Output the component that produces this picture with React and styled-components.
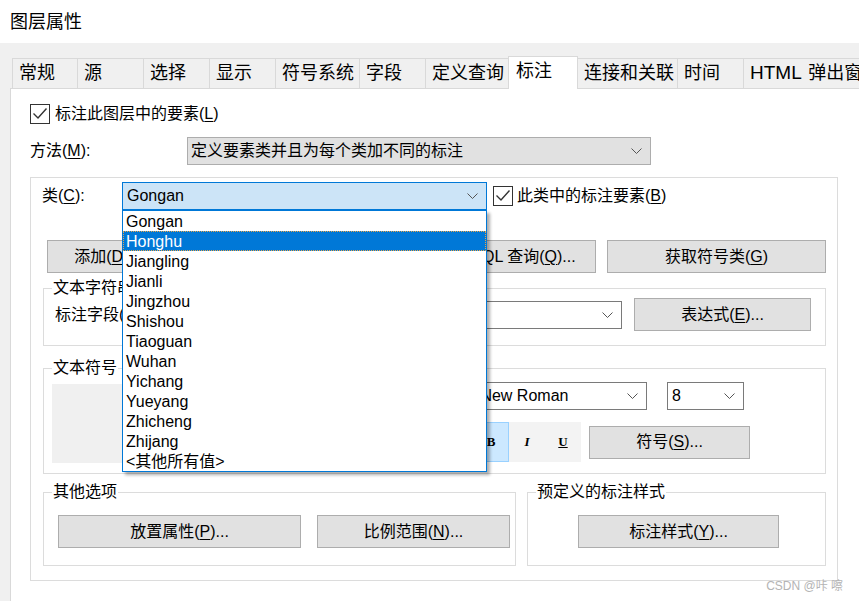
import React from "react";
import styled, { createGlobalStyle } from "styled-components";

const FONT = `"Liberation Sans", "Noto Sans CJK SC", sans-serif`;

const GlobalStyle = createGlobalStyle`
  html, body { margin: 0; padding: 0; background: #fff; }
  body { font-family: ${FONT}; color: #000; }
  *, *::before, *::after { box-sizing: border-box; }
`;

const Window = styled.div`
  position: relative;
  width: 859px;
  height: 601px;
  overflow: hidden;
  display: flex;
  flex-direction: column;
  background: #fff;
  font-family: ${FONT};
  color: #000;
`;

const TitleBar = styled.div`
  flex: none;
  height: 43px;
  padding-left: 10px;
  display: flex;
  align-items: center;
  font-size: 18px;
  line-height: 22px;
`;

const Body = styled.div`
  flex: 1;
  min-height: 0;
  display: flex;
  flex-direction: column;
  background: #f0f0f0;
  padding: 15px 0 0 10px;
`;

const TabStrip = styled.div`
  flex: none;
  display: flex;
  align-items: flex-end;
  height: 30px;
  padding-left: 2px;
  position: relative;
  z-index: 1;
`;

const Tab = styled.div`
  flex: none;
  width: ${(p) => p.$w}px;
  height: ${(p) => (p.$active ? 33 : 30)}px;
  margin-left: -1px;
  margin-bottom: ${(p) => (p.$active ? -1 : 0)}px;
  border: 1px solid #d9d9d9;
  border-bottom: none;
  background: ${(p) => (p.$active ? "#fff" : "#f0f0f0")};
  padding-left: ${(p) => (p.$active ? 7 : 6)}px;
  font-size: 18px;
  line-height: 28px;
  white-space: nowrap;
  overflow: hidden;
  position: relative;
  z-index: ${(p) => (p.$active ? 2 : 0)};
  &:first-child { margin-left: 0; }
`;

const TabLatin = styled.span`
  font-size: 19px;
  margin-right: 2px;
`;

const Panel = styled.div`
  flex: 1;
  width: 900px;
  background: #fff;
  border-left: 1px solid #d9d9d9;
  border-top: 1px solid #d9d9d9;
  padding: 15px 0 0 19px;
`;

const CheckRow = styled.div`
  display: flex;
  align-items: center;
  gap: ${(p) => p.$gap ?? 5}px;
  margin-left: ${(p) => p.$ml ?? 0}px;
  font-size: 16px;
  line-height: 20px;
  white-space: nowrap;
`;

const U = styled.span`
  text-decoration: underline;
  text-underline-offset: 2px;
  text-decoration-thickness: 1px;
`;

const FormRow = styled.div`
  display: flex;
  align-items: center;
  margin-top: ${(p) => p.$mt ?? 0}px;
`;

const FieldLabel = styled.div`
  flex: none;
  width: ${(p) => p.$w}px;
  font-size: 16px;
  line-height: 20px;
  white-space: nowrap;
`;

const selectVariants = {
  gray: "background:#e1e1e1;border-color:#adadad;",
  white: "background:#fff;border-color:#7a7a7a;",
  focus: "background:#cce4f7;border-color:#0078d7;",
};

const Select = styled.div`
  flex: none;
  width: ${(p) => p.$w}px;
  height: 28px;
  border: 1px solid;
  ${(p) => selectVariants[p.$variant || "gray"]}
  display: flex;
  align-items: center;
  justify-content: space-between;
  padding: 0 8px 0 ${(p) => p.$pl ?? 3}px;
  font-size: 16px;
  line-height: 20px;
  white-space: nowrap;
  overflow: hidden;
`;

const ClassGroup = styled.div`
  width: 808px;
  margin-top: 12px;
  border: 1px solid #dcdcdc;
  padding: 4px 0 14px 0;
`;

const ClassRow = styled.div`
  display: flex;
  align-items: center;
  height: 28px;
  padding-left: 11px;
`;

const ComboWrap = styled.div`
  position: relative;
  flex: none;
`;

const DropList = styled.div`
  position: absolute;
  top: 28px;
  left: 0;
  width: 365px;
  border: 1px solid #0078d7;
  background: #fff;
  box-shadow: 3px 3px 3px rgba(0, 0, 0, 0.32);
  z-index: 10;
`;

const DropItem = styled.div`
  height: 20px;
  line-height: 22px;
  padding-left: 3px;
  font-size: 16px;
  white-space: nowrap;
  background: ${(p) => (p.$sel ? "#0078d7" : "transparent")};
  color: ${(p) => (p.$sel ? "#fff" : "#000")};
  outline: ${(p) => (p.$sel ? "1px dotted #e9a54a" : "none")};
  outline-offset: -1px;
`;

const ButtonRow = styled.div`
  display: flex;
  gap: 11px;
  margin-top: 30px;
  padding-left: 16px;
`;

const Button = styled.div`
  flex: none;
  width: ${(p) => p.$w}px;
  height: 33px;
  margin-left: ${(p) => p.$ml ?? 0}px;
  background: #e1e1e1;
  border: 1px solid #adadad;
  display: flex;
  align-items: center;
  justify-content: center;
  font-size: 16px;
  line-height: 20px;
  white-space: nowrap;
`;

const Group = styled.div`
  position: relative;
  flex: none;
  width: ${(p) => p.$w}px;
  height: ${(p) => p.$h}px;
  margin-top: ${(p) => p.$mt ?? 0}px;
  margin-left: ${(p) => p.$ml ?? 0}px;
  border: 1px solid #dcdcdc;
  padding: ${(p) => p.$pad || "0"};
  display: flex;
  align-items: flex-start;
  gap: ${(p) => p.$gap ?? 0}px;
`;

const Legend = styled.div`
  position: absolute;
  top: -11px;
  left: 8px;
  padding: 0 1px;
  background: #fff;
  font-size: 16px;
  line-height: 20px;
  white-space: nowrap;
`;

const Preview = styled.div`
  flex: none;
  width: 360px;
  height: 79px;
  margin-top: 15px;
  background: #f0f0f0;
`;

const SymbolCol = styled.div`
  display: flex;
  flex-direction: column;
  margin-left: 16px;
  padding-top: 13px;
`;

const SymbolRow = styled.div`
  display: flex;
  align-items: center;
  gap: ${(p) => p.$gap ?? 0}px;
  margin-top: ${(p) => p.$mt ?? 0}px;
`;

const Toolbar = styled.div`
  display: flex;
  height: 40px;
  background: #f3f3f3;
`;

const ToolButton = styled.div`
  width: ${(p) => p.$w ?? 36}px;
  height: 40px;
  display: flex;
  align-items: center;
  justify-content: center;
  border: 1px solid ${(p) => (p.$on ? "#99d1ff" : "transparent")};
  background: ${(p) => (p.$on ? "#cce8ff" : "transparent")};
  font-family: "Liberation Serif", serif;
  font-weight: bold;
  font-size: 13px;
  font-style: ${(p) => (p.$italic ? "italic" : "normal")};
  text-decoration: ${(p) => (p.$under ? "underline" : "none")};
`;

const BottomRow = styled.div`
  display: flex;
  gap: 11px;
  margin-top: 18px;
  margin-left: 12px;
`;

const Watermark = styled.div`
  position: absolute;
  right: 16px;
  bottom: 8px;
  font-size: 12px;
  line-height: 14px;
  color: #b4b4b4;
  white-space: nowrap;
`;

const Chevron = () => (
  <svg width="11" height="6" viewBox="0 0 11 6" style={{ flex: "none" }}>
    <path d="M0.5 0.5 L5.5 5.5 L10.5 0.5" fill="none" stroke="#555" strokeWidth="1" />
  </svg>
);

const CheckBox = () => (
  <svg width="20" height="20" viewBox="0 0 20 20" style={{ flex: "none" }}>
    <rect x="0.5" y="0.5" width="19" height="19" fill="#fff" stroke="#333" />
    <path d="M3.5 9.5 L8 14 L16.5 4.5" fill="none" stroke="#333" strokeWidth="1.4" />
  </svg>
);

const tabs = [
  { t: "常规", w: 66 },
  { t: "源", w: 67 },
  { t: "选择", w: 67 },
  { t: "显示", w: 67 },
  { t: "符号系统", w: 85 },
  { t: "字段", w: 67 },
  { t: "定义查询", w: 84 },
  { t: "标注", w: 70, active: true },
  { t: "连接和关联", w: 101 },
  { t: "时间", w: 67 },
  { t: "弹出窗口", latin: "HTML", w: 140 },
];

const classes = [
  "Gongan",
  "Honghu",
  "Jiangling",
  "Jianli",
  "Jingzhou",
  "Shishou",
  "Tiaoguan",
  "Wuhan",
  "Yichang",
  "Yueyang",
  "Zhicheng",
  "Zhijang",
  "<其他所有值>",
];

export default function App() {
  return (
    <>
      <GlobalStyle />
      <Window>
        <TitleBar>图层属性</TitleBar>
        <Body>
          <TabStrip>
            {tabs.map((tab) => (
              <Tab key={tab.t} $w={tab.w} $active={tab.active}>
                {tab.latin && <TabLatin>{tab.latin} </TabLatin>}
                {tab.t}
              </Tab>
            ))}
          </TabStrip>
          <Panel>
            <CheckRow>
              <CheckBox />
              <span>
                标注此图层中的要素(<U>L</U>)
              </span>
            </CheckRow>

            <FormRow $mt={13}>
              <FieldLabel $w={157}>
                方法(<U>M</U>):
              </FieldLabel>
              <Select $w={464} $variant="gray">
                <span>定义要素类并且为每个类加不同的标注</span>
                <Chevron />
              </Select>
            </FormRow>

            <ClassGroup>
              <ClassRow>
                <FieldLabel $w={80}>
                  类(<U>C</U>):
                </FieldLabel>
                <ComboWrap>
                  <Select $w={365} $variant="focus" $pl={4}>
                    <span>Gongan</span>
                    <Chevron />
                  </Select>
                  <DropList>
                    {classes.map((c) => (
                      <DropItem key={c} $sel={c === "Honghu"}>
                        {c}
                      </DropItem>
                    ))}
                  </DropList>
                </ComboWrap>
                <CheckRow $ml={6} $gap={4}>
                  <CheckBox />
                  <span>
                    此类中的标注要素(<U>B</U>)
                  </span>
                </CheckRow>
              </ClassRow>

              <ButtonRow>
                <Button $w={122}>
                  添加(<U>D</U>)...
                </Button>
                <Button $w={127}>
                  删除(<U>R</U>)
                </Button>
                <Button $w={122}>
                  重命名(<U>A</U>)...
                </Button>
                <Button $w={145}>
                  SQL 查询(<U>Q</U>)...
                </Button>
                <Button $w={219}>
                  获取符号类(<U>G</U>)
                </Button>
              </ButtonRow>

              <Group $w={783} $h={58} $mt={15} $ml={12} $pad="9px 0 0 11px">
                <Legend>文本字符串</Legend>
                <FormRow>
                  <FieldLabel $w={132}>
                    标注字段(<U>I</U>):
                  </FieldLabel>
                  <Select $w={435} $variant="white">
                    <span>NAME</span>
                    <Chevron />
                  </Select>
                  <Button $w={177} $ml={12}>
                    表达式(<U>E</U>)...
                  </Button>
                </FormRow>
              </Group>

              <Group $w={783} $h={106} $mt={22} $ml={12} $pad="0 0 0 8px">
                <Legend>文本符号</Legend>
                <Preview />
                <SymbolCol>
                  <SymbolRow $gap={20}>
                    <Select $w={219} $variant="white" $pl={4}>
                      <span>Times New Roman</span>
                      <Chevron />
                    </Select>
                    <Select $w={77} $variant="white" $pl={4}>
                      <span>8</span>
                      <Chevron />
                    </Select>
                  </SymbolRow>
                  <SymbolRow $mt={12} $gap={8}>
                    <Toolbar>
                      <ToolButton $w={45} />
                      <ToolButton $on>B</ToolButton>
                      <ToolButton $italic>I</ToolButton>
                      <ToolButton $under>U</ToolButton>
                    </Toolbar>
                    <Button $w={161}>
                      符号(<U>S</U>)...
                    </Button>
                  </SymbolRow>
                </SymbolCol>
              </Group>

              <BottomRow>
                <Group $w={473} $h={74} $pad="22px 0 0 14px" $gap={16}>
                  <Legend>其他选项</Legend>
                  <Button $w={243}>
                    放置属性(<U>P</U>)...
                  </Button>
                  <Button $w={193}>
                    比例范围(<U>N</U>)...
                  </Button>
                </Group>
                <Group $w={299} $h={74} $pad="22px 0 0 50px">
                  <Legend>预定义的标注样式</Legend>
                  <Button $w={201}>
                    标注样式(<U>Y</U>)...
                  </Button>
                </Group>
              </BottomRow>
            </ClassGroup>
          </Panel>
        </Body>
        <Watermark>CSDN @咔 嚓</Watermark>
      </Window>
    </>
  );
}
